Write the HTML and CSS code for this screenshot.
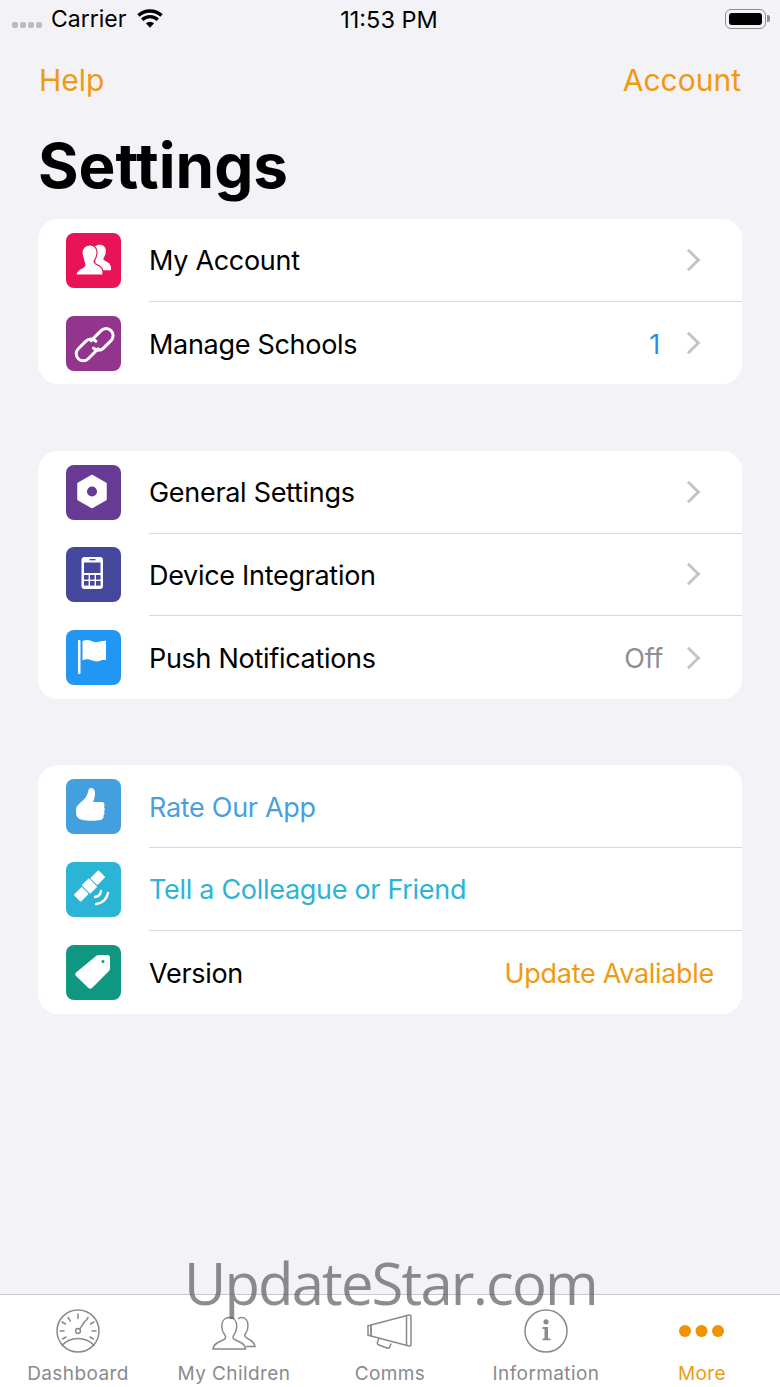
FILE: index.html
```html
<!DOCTYPE html>
<html lang="en">

<head>
    <meta charset="UTF-8">
    <meta name="viewport" content="width=device-width, initial-scale=1.0">
    <title>Settings</title>
    <link rel="stylesheet" href="styles.css">
</head>

<body>
    <div class="screen">
        <div class="status-bar">
            <div class="status-left">
                <span class="signal"><i></i><i></i><i></i><i></i></span>
                <span>Carrier</span>
                <svg class="wifi" width="26" height="20" viewBox="0 0 28 20">
                    <path d="M14 19.500 9.600 14.600a6.400 6.400 0 0 1 8.800 0z" fill="#000" />
                    <path d="M5.600 10.800a12 12 0 0 1 16.800 0M1.600 6.300a18 18 0 0 1 24.800 0" fill="none" stroke="#000" stroke-width="3.600" />
                </svg>
            </div>
            <div class="status-time">11:53 PM</div>
            <div class="status-right">
                <span class="battery"><i></i></span>
            </div>
        </div>

        <div class="nav-bar">
            <span>Help</span>
            <span>Account</span>
        </div>

        <h1 class="title">Settings</h1>

        <div class="card">
            <div class="row">
                <span class="icon icon-account">
                    <svg width="55" height="55" viewBox="0 0 55 55" fill="#fff">
                        <path transform="translate(13.500 1.500) scale(.85)" d="M24 12c4.500 0 7.300 3.500 7 8-.2 3-1.300 5.500-2.500 7.300-.8 1.200-.4 2.600 1 3.400l4 2.300c1.800 1 3 2.500 3.500 5.500v3.500H10c0-1.500 .5-3.500 2.500-5l5-3c1.400-.8 1.800-2.200 1-3.400C17.300 25.500 16.200 23 16 20c-.3-4.500 3-8 8-8z" />
                        <path stroke="#e91357" stroke-width="1.200" d="M24 12c4.500 0 7.300 3.500 7 8-.2 3-1.300 5.500-2.500 7.300-.8 1.200-.4 2.600 1 3.400l4 2.300c1.800 1 3 2.500 3.500 5.500v3.500H10c0-1.500 .5-3.500 2.500-5l5-3c1.400-.8 1.800-2.200 1-3.400C17.300 25.500 16.200 23 16 20c-.3-4.500 3-8 8-8z" />
                    </svg>
                </span>
                <div class="row-body">
                    <span class="label">My Account</span>
                    <span class="chevron"></span>
                </div>
            </div>
            <div class="row">
                <span class="icon icon-schools">
                    <svg width="55" height="55" viewBox="3 3 47 47" fill="none" stroke="#fff" stroke-width="2.600" stroke-linecap="round">
                        <path d="M24.500 24 33 15.500a6 6 0 0 1 8.500 8.500l-6.500 6.500a6 6 0 0 1-8.500 0" />
                        <path d="M30.500 31 22 39.500a6 6 0 0 1-8.500-8.500l6.500-6.500a6 6 0 0 1 8.500 0" />
                    </svg>
                </span>
                <div class="row-body">
                    <span class="label">Manage Schools</span>
                    <span class="value value-blue">1</span>
                    <span class="chevron"></span>
                </div>
            </div>
        </div>

        <div class="card">
            <div class="row">
                <span class="icon icon-general">
                    <svg width="55" height="55" viewBox="0 0 55 55">
                        <path d="M26 10.500 40 18.500v16L26 42.500 12 34.500v-16z" fill="#fff" stroke="#fff" stroke-width="1.500" stroke-linejoin="round" />
                        <circle cx="26" cy="26.500" r="5" fill="#673a94" />
                    </svg>
                </span>
                <div class="row-body">
                    <span class="label">General Settings</span>
                    <span class="chevron"></span>
                </div>
            </div>
            <div class="row">
                <span class="icon icon-device">
                    <svg width="55" height="55" viewBox="0 0 55 55">
                        <rect x="15.500" y="10" width="21.500" height="32" rx="3" fill="#fff" />
                        <rect x="23.500" y="12" width="6" height="1.300" fill="#45479c" />
                        <rect x="18" y="15.500" width="16.500" height="10.500" fill="#45479c" />
                        <g fill="#45479c">
                            <rect x="18" y="28" width="4.600" height="4.600" />
                            <rect x="24" y="28" width="4.600" height="4.600" />
                            <rect x="30" y="28" width="4.600" height="4.600" />
                            <rect x="18" y="34" width="4.600" height="4.600" />
                            <rect x="24" y="34" width="4.600" height="4.600" />
                            <rect x="30" y="34" width="4.600" height="4.600" />
                        </g>
                    </svg>
                </span>
                <div class="row-body">
                    <span class="label">Device Integration</span>
                    <span class="chevron"></span>
                </div>
            </div>
            <div class="row">
                <span class="icon icon-push">
                    <svg width="55" height="55" viewBox="0 0 55 55" fill="#fff">
                        <rect x="12" y="10" width="2.500" height="34" rx="1" />
                        <path d="M16.500 11c3-1.500 6-1.500 9 0s6 1.500 8.500 .5 4-.5 6-.8V30c-2.500 0-4 0-6 .8s-5.500 1-8.500-.5-6-1.500-9 0z" />
                    </svg>
                </span>
                <div class="row-body">
                    <span class="label">Push Notifications</span>
                    <span class="value value-gray">Off</span>
                    <span class="chevron"></span>
                </div>
            </div>
        </div>

        <div class="card">
            <div class="row">
                <span class="icon icon-rate">
                    <svg width="55" height="55" viewBox="0 0 55 55" fill="#fff">
                        <path d="M10 31c0-3 2-5.500 5-8 4-3 6-6 7-10 .5-2 1-4 3-4 3 0 4.500 3 4 7-.3 2.500-1 5-2 7h9c2.500 0 3 3 2 5 1 1.500 1 3 0 4.500 .8 1.500 .5 3-.5 4 .3 2.500-1 4-3 4.500-3 .7-9 1-14 .5-3-.3-5-.5-7-1.500-3-1.500-3.500-4.500-3.500-8z" />
                    </svg>
                </span>
                <div class="row-body">
                    <span class="label label-rate">Rate Our App</span>
                </div>
            </div>
            <div class="row">
                <span class="icon icon-tell">
                    <svg width="55" height="55" viewBox="0 0 55 55">
                        <g fill="#fff" transform="rotate(-45 23.500 24)">
                            <rect x="6" y="19" width="11.500" height="10" rx="1" />
                            <rect x="18.500" y="18" width="10" height="12" />
                            <rect x="29.500" y="19" width="11.500" height="10" rx="1" />
                        </g>
                        <path d="M29 35c3.500-.5 5.500-2.500 6-6M30 42c6-.5 11-5 12-11" fill="none" stroke="#fff" stroke-width="2.500" stroke-linecap="round" />
                    </svg>
                </span>
                <div class="row-body">
                    <span class="label label-tell">Tell a Colleague or Friend</span>
                </div>
            </div>
            <div class="row">
                <span class="icon icon-version">
                    <svg width="55" height="55" viewBox="0 0 55 55">
                        <path d="M33 10h8.500c1.500 0 2.500 1 2.500 2.500V23c0 1.500-.5 2.500-1.500 3.500L26 43c-1 1-2.500 1-3.500 0L10 31c-1-1-1-2.500 0-3.500L29.500 11.500c1-1 2-1.500 3.500-1.500z" fill="#fff" />
                        <circle cx="37" cy="16.500" r="1.500" fill="#0f9781" />
                    </svg>
                </span>
                <div class="row-body">
                    <span class="label">Version</span>
                    <span class="value value-orange">Update Avaliable</span>
                </div>
            </div>
        </div>

        <div class="tab-bar">
            <div class="tab">
                <svg width="46" height="46" viewBox="0 0 46 46" fill="none" stroke="#8a8a8e" stroke-width="1.500" stroke-linecap="round">
                    <circle cx="23" cy="23" r="21" />
                    <circle cx="23" cy="23" r="2.400" />
                    <path d="M24.500 21.300 30 13M23 6v4.500M13 9.500l2.300 3.500M7 14l3.500 2M5 23h4M7.500 31l3.500-2M33 9.500l-1.700 2.800M39 14l-3.500 2M41 23h-4M38.500 31 35 29" />
                    <path d="M7 37.500c4-4.500 9.500-7 16-7s12 2.500 16 7" />
                </svg>
                <span>Dashboard</span>
            </div>
            <div class="tab">
                <svg width="46" height="46" viewBox="0 0 46 46" fill="none" stroke="#8a8a8e" stroke-width="1.500">
                    <path d="M2 41c.5-3 1.500-4.500 4-6l7-3.500c2-1 2-3 .8-4.500-1.800-2.500-3-5-3-8.500 0-5 2.500-9 7.500-9s7.500 4 7.500 9c0 3.500-1.200 6-3 8.500-1.200 1.500-1.200 3.500 .8 4.500l7 3.500c2.500 1.500 3.500 3 4 6z" />
                    <path d="M27 11c1-1 2-1.500 3.500-1.500 4.500 0 6.500 4 6.500 8 0 3-1 6-2.500 8-1 1.500-1 3 .5 4l5.500 3.500c2 1.300 3 3 3.500 5.500H35" />
                </svg>
                <span>My Children</span>
            </div>
            <div class="tab">
                <svg width="46" height="46" viewBox="0 0 46 46" fill="none" stroke="#8a8a8e" stroke-width="1.500" stroke-linejoin="round">
                    <path d="M4 17 42 7c1-.3 2 .3 2 1.500v28c0 1.200-1 1.800-2 1.500L4 28z" />
                    <path d="M1 17.500h3V27.500H1z" />
                    <path d="M39.500 8v29" />
                    <path d="M12 30l-1.500 4c-.5 1.500 0 2.500 1.500 3l8 3c1.500 .5 2.500 0 3-1.500l1-3" />
                </svg>
                <span>Comms</span>
            </div>
            <div class="tab">
                <svg width="46" height="46" viewBox="0 0 46 46">
                    <circle cx="23" cy="23" r="21" fill="none" stroke="#8a8a8e" stroke-width="1.500" />
                    <circle cx="23" cy="13.800" r="2.600" fill="#8a8a8e" />
                    <path d="M19.500 19h5.500v11.500h2.500v1.800h-8v-1.800h2V21h-2z" fill="#8a8a8e" />
                </svg>
                <span>Information</span>
            </div>
            <div class="tab tab-active">
                <svg width="46" height="46" viewBox="0 0 46 46" fill="#f09300">
                    <circle cx="6" cy="23" r="6" />
                    <circle cx="22.500" cy="23" r="6" />
                    <circle cx="39" cy="23" r="6" />
                </svg>
                <span>More</span>
            </div>
        </div>

        <div class="watermark">UpdateStar.com</div>
    </div>
</body>

</html>
```

FILE: styles.css
```css
:root {
    --accent-color: #f09a12;
    --background-color: #f2f2f7;
    --card-color: #ffffff;
    --line-color: #d9d9dc;
    --tab-color: #8a8a8e;
}

* {
    margin: 0;
    padding: 0;
    box-sizing: border-box;
}

body {
    font-family: Inter, 'Liberation Sans', sans-serif;
    background-color: var(--background-color);
    color: #000;
}

.screen {
    position: relative;
    display: flex;
    flex-direction: column;
    width: 780px;
    height: 1387px;
    overflow: hidden;
}

.status-bar {
    display: grid;
    grid-template-columns: 1fr auto 1fr;
    align-items: center;
    height: 38px;
    padding: 0 14px 0 12px;
    font-size: 23px;
}

.status-left {
    display: flex;
    align-items: center;
    gap: 9px;
}

.signal {
    display: flex;
    gap: 2px;
    margin-top: 12px;
}

.signal i {
    width: 6px;
    height: 6px;
    border-radius: 2px;
    background-color: #bcbcbf;
}

.wifi {
    margin-left: 2px;
}

.status-time {
    text-align: center;
    font-size: 23.500px;
}

.status-right {
    display: flex;
    justify-content: flex-end;
}

.battery {
    position: relative;
    display: block;
    width: 41px;
    height: 20px;
    padding: 3px;
    border: 1.500px solid #8e8e93;
    border-radius: 6px;
}

.battery::after {
    content: '';
    position: absolute;
    top: 5px;
    right: -5px;
    width: 3px;
    height: 7px;
    border-radius: 0 2px 2px 0;
    background-color: #8e8e93;
}

.battery i {
    display: block;
    height: 100%;
    border-radius: 3px;
    background-color: #000;
}

.nav-bar {
    display: flex;
    justify-content: space-between;
    padding: 0 39px;
    margin-top: 22px;
    font-size: 30px;
    line-height: 40px;
    color: var(--accent-color);
}

.title {
    padding-left: 38px;
    margin-top: 24px;
    margin-bottom: 12px;
    font-size: 62px;
    line-height: 83px;
    font-weight: 700;
}

.card {
    margin: 0 38px 66.500px;
    border-radius: 20px;
    background-color: var(--card-color);
}

.row {
    display: flex;
    align-items: center;
    height: 82.700px;
    padding-left: 28px;
}

.row-body {
    display: flex;
    flex: 1;
    align-items: center;
    align-self: stretch;
    margin-left: 28px;
    padding-right: 28px;
    border-bottom: 1px solid var(--line-color);
}

.row:last-child .row-body {
    border-bottom: none;
}

.label {
    flex: 1;
    padding-top: 2px;
    font-size: 27px;
    letter-spacing: -0.300px;
}

.label-rate {
    color: #4a9fdc;
}

.label-tell {
    color: #2db3d6;
}

.value {
    padding-top: 2px;
    font-size: 27px;
    letter-spacing: -0.300px;
}

.value-blue {
    margin-right: 3px;
    color: #2b8fe0;
}

.value-gray {
    color: #8e8e93;
}

.value-orange {
    color: var(--accent-color);
}

.chevron {
    width: 16px;
    height: 16px;
    margin: 0 17px 0 18px;
    border-top: 3.500px solid #c4c4c7;
    border-right: 3.500px solid #c4c4c7;
    transform: rotate(45deg);
}

.icon {
    display: block;
    flex: none;
    width: 55px;
    height: 55px;
    border-radius: 8px;
}

.icon svg {
    display: block;
}

.icon-account {
    background-color: #e91357;
}

.icon-schools {
    background-color: #94358d;
}

.icon-general {
    background-color: #673a94;
}

.icon-device {
    background-color: #45479c;
}

.icon-push {
    background-color: #2196f3;
}

.icon-rate {
    background-color: #439fdd;
}

.icon-tell {
    background-color: #2bb4d6;
}

.icon-version {
    background-color: #0f9781;
}

.tab-bar {
    position: absolute;
    left: 0;
    right: 0;
    bottom: 0;
    display: grid;
    grid-template-columns: repeat(5, 1fr);
    height: 93px;
    padding: 13px 0 0;
    border-top: 1px solid #c9c9cc;
    background-color: var(--card-color);
}

.tab {
    display: flex;
    flex-direction: column;
    align-items: center;
    gap: 8px;
    font-size: 19px;
    letter-spacing: 0.400px;
    color: var(--tab-color);
}

.tab svg {
    display: block;
}

.tab-active {
    color: var(--accent-color);
}

.watermark {
    position: absolute;
    left: 184px;
    top: 1242px;
    font-family: 'Open Sans', sans-serif;
    font-size: 58px;
    line-height: 82px;
    letter-spacing: -1.850px;
    color: rgba(80, 80, 84, 0.65);
    white-space: nowrap;
}
```
